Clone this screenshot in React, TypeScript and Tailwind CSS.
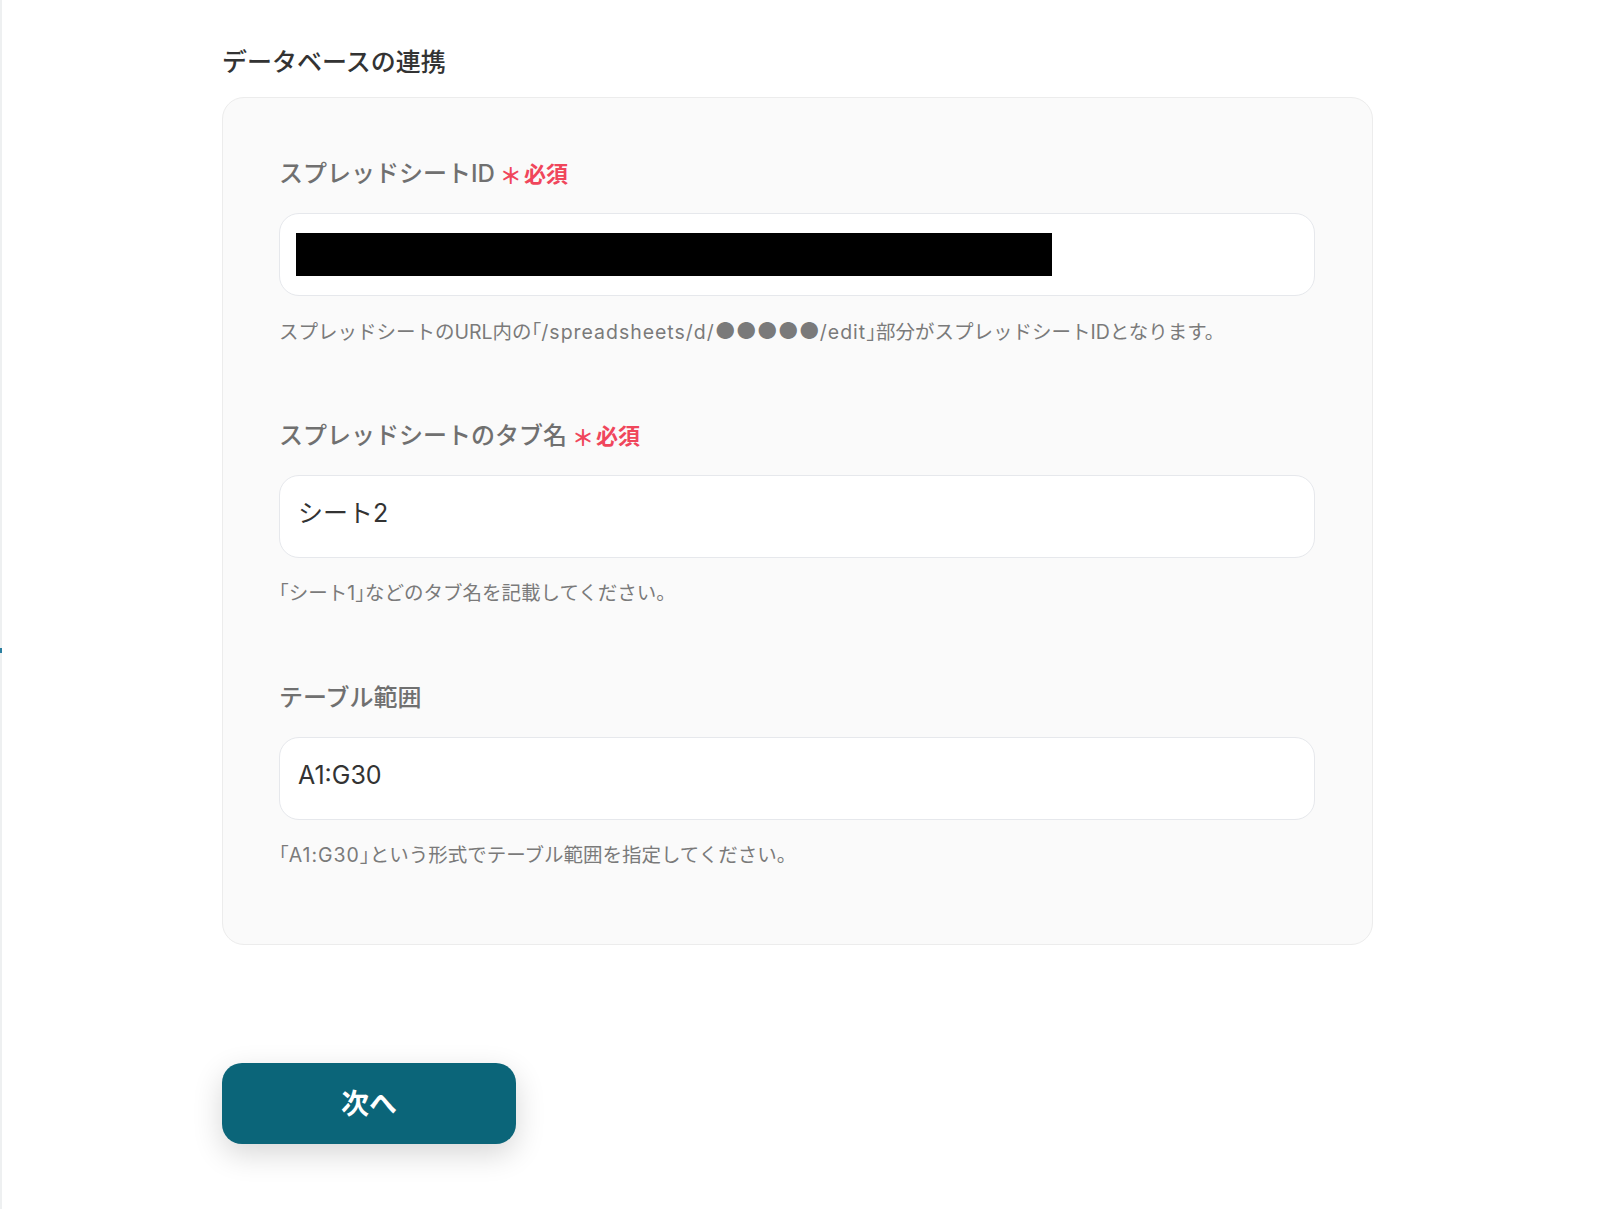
const FONT = { fontFamily: 'Inter, "Noto Sans CJK JP", "Noto Sans", sans-serif' };

type Field = {
  label: string;
  required: boolean;
  value: string;
  redacted?: boolean;
  help: React.ReactNode;
};

const Latin = ({ children }: { children: React.ReactNode }) => (
  <span className="tracking-[0.05em]">{children}</span>
);
const Open = () => <span className="[font-feature-settings:'halt']">「</span>;
const Close = () => <span className="[font-feature-settings:'halt']">」</span>;

const fields: Field[] = [
  {
    label: "スプレッドシートID",
    required: true,
    value: "",
    redacted: true,
    help: (
      <>
        スプレッドシートのURL内の<Open />
        <Latin>/spreadsheets/d/</Latin>
        <span className="text-[23px]">●●●●●</span>
        <Latin>/edit</Latin>
        <Close />部分がスプレッドシートIDとなります。
      </>
    ),
  },
  {
    label: "スプレッドシートのタブ名",
    required: true,
    value: "シート2",
    help: (
      <>
        <Open />シート1<Close />などのタブ名を記載してください。
      </>
    ),
  },
  {
    label: "テーブル範囲",
    required: false,
    value: "A1:G30",
    help: (
      <>
        <Open />
        <Latin>A1:G30</Latin>
        <Close />という形式でテーブル範囲を指定してください。
      </>
    ),
  },
];

function FormField({ field }: { field: Field }) {
  return (
    <div className="flex flex-col">
      <div className="flex items-center h-[32px]">
        <span className="text-[24px] font-medium text-[#707070]">{field.label}</span>
        {field.required && (
          <span className="flex items-center ml-[5px] text-[#f0465b] font-bold">
            <span className="text-[22px] leading-none mt-[4px]">＊</span>
            <span className="text-[22px] ml-[2px]">必須</span>
          </span>
        )}
      </div>
      <div className="mt-[23px] h-[83px] rounded-[20px] border border-[#e6e8ec] bg-white flex items-center px-[18px]">
        {field.redacted ? (
          <div className="-ml-[2px] w-[756px] h-[43px] bg-black" />
        ) : (
          <span className="-mt-[6px] text-[25px] text-[#333333]">{field.value}</span>
        )}
      </div>
      <p className="mt-[22px] h-[26px] leading-[26px] text-[19.5px] text-[#7a7a7a] whitespace-nowrap">
        {field.help}
      </p>
    </div>
  );
}

export default function App() {
  return (
    <div className="relative min-h-screen bg-white" style={FONT}>
      <div className="absolute left-0 top-0 h-full w-[2px] bg-[#eef0f1]" />
      <div className="absolute left-0 top-[648px] h-[5px] w-[2px] bg-[#2b7fa0]" />

      <div className="pl-[222px] pt-[46px]">
        <h1 className="h-[32px] leading-[32px] text-[25px] font-medium text-[#333333]">データベースの連携</h1>

        <section className="mt-[19px] w-[1151px] rounded-[22px] border border-[#ececec] bg-[#fafafa] pl-[56px] pr-[57px] pt-[60px] pb-[76px] flex flex-col gap-[76px]">
          {fields.map((field) => (
            <FormField key={field.label} field={field} />
          ))}
        </section>

        <button
          type="button"
          className="mt-[118px] w-[294px] h-[81px] rounded-[20px] bg-[#0b6579] text-white text-[28px] font-bold shadow-[0_10px_30px_rgba(0,0,0,0.16)]"
        >
          次へ
        </button>
      </div>
    </div>
  );
}
